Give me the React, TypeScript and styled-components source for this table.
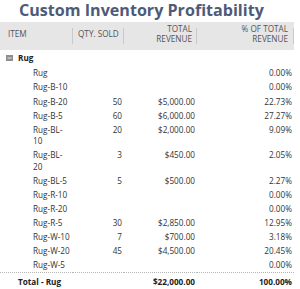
import * as React from 'react';
import styled, { createGlobalStyle } from 'styled-components';

const GlobalStyle = createGlobalStyle`
    body {
        margin: 0;
        background: #ffffff;
        font-family: "Open Sans", "Liberation Sans", sans-serif;
    }
`

const Page = styled.div`
    width: 300px;
    height: 289px;
    overflow: hidden;
`

const Title = styled.h1`
    margin: 0 0 2px;
    padding: 1px 0 0 19px;
    font-size: 16.1px;
    line-height: 19px;
    font-weight: bold;
    color: #4d5b78;
    white-space: nowrap;
`

const Table = styled.table`
    width: 294px;
    table-layout: fixed;
    border-collapse: collapse;
    font-size: 8.2px;
    color: #333333;
`

const HeadRow = styled.tr`
    background: #e6e6e6;
`

const HeadCell = styled.th<{ $align?: 'left' | 'right'; $padLeft?: number; $padRight?: number }>`
    position: relative;
    height: 28px;
    box-sizing: border-box;
    padding: 2px ${p => p.$padRight ?? 5}px 6px ${p => p.$padLeft ?? 5}px;
    text-align: ${p => p.$align ?? 'left'};
    vertical-align: middle;
    font-weight: normal;
    font-size: 8.2px;
    line-height: 10px;
    color: #555555;
    text-transform: uppercase;

    &::after {
        content: '';
        position: absolute;
        right: 0;
        top: 6px;
        bottom: 6px;
        width: 1px;
        background: #c9c9c9;
    }
`

const GroupCell = styled.td`
    height: 16px;
    padding: 0 0 0 6px;
    font-weight: bold;
    color: #222222;
    line-height: 10px;
`

const GroupLabel = styled.span`
    display: inline-flex;
    align-items: center;
    gap: 5px;
`

const Cell = styled.td<{ $right?: boolean; $indent?: number }>`
    padding: 1.35px ${p => (p.$right ? 2 : 3)}px 1.35px ${p => p.$indent ?? 0}px;
    line-height: 11.4px;
    vertical-align: top;
    text-align: ${p => (p.$right ? 'right' : 'left')};
`

const TotalRow = styled.tr`
    border-top: 1px dotted #b5b5b5;
    border-bottom: 1px dotted #b5b5b5;
`

const TotalCell = styled.td<{ $right?: boolean; $indent?: number }>`
    height: 16px;
    padding: 0 ${p => (p.$right ? 2 : 0)}px 0 ${p => p.$indent ?? 0}px;
    font-weight: bold;
    color: #222222;
    text-align: ${p => (p.$right ? 'right' : 'left')};
    vertical-align: middle;
`

const CollapseIcon = () => (
    <svg width="7" height="6" viewBox="0 0 7 6">
        <rect x="0" y="0" width="7" height="6" fill="#8e8e8e" />
        <rect x="1.5" y="2.5" width="4" height="1" fill="#e8e8e8" />
    </svg>
)

const rows: [string, string, string, string][] = [
    ['Rug', '', '', '0.00%'],
    ['Rug-B-10', '', '', '0.00%'],
    ['Rug-B-20', '50', '$5,000.00', '22.73%'],
    ['Rug-B-5', '60', '$6,000.00', '27.27%'],
    ['Rug-BL-10', '20', '$2,000.00', '9.09%'],
    ['Rug-BL-20', '3', '$450.00', '2.05%'],
    ['Rug-BL-5', '5', '$500.00', '2.27%'],
    ['Rug-R-10', '', '', '0.00%'],
    ['Rug-R-20', '', '', '0.00%'],
    ['Rug-R-5', '30', '$2,850.00', '12.95%'],
    ['Rug-W-10', '7', '$700.00', '3.18%'],
    ['Rug-W-20', '45', '$4,500.00', '20.45%'],
    ['Rug-W-5', '', '', '0.00%'],
]

export default function App() {
    return (
        <>
            <GlobalStyle />
            <Page>
                <Title>Custom Inventory Profitability</Title>
                <Table>
                    <colgroup>
                        <col style={{ width: 73 }} />
                        <col style={{ width: 51 }} />
                        <col style={{ width: 73 }} />
                        <col style={{ width: 97 }} />
                    </colgroup>
                    <thead>
                        <HeadRow>
                            <HeadCell $padLeft={8}>Item</HeadCell>
                            <HeadCell>Qty. Sold</HeadCell>
                            <HeadCell $align="right">Total<br />Revenue</HeadCell>
                            <HeadCell $align="right" $padRight={6}>% of Total<br />Revenue</HeadCell>
                        </HeadRow>
                    </thead>
                    <tbody>
                        <tr>
                            <GroupCell colSpan={4}>
                                <GroupLabel><CollapseIcon />Rug</GroupLabel>
                            </GroupCell>
                        </tr>
                        {rows.map(([item, qty, rev, pct]) => (
                            <tr key={item}>
                                <Cell $indent={33}>{item}</Cell>
                                <Cell $right>{qty}</Cell>
                                <Cell $right>{rev}</Cell>
                                <Cell $right>{pct}</Cell>
                            </tr>
                        ))}
                        <TotalRow>
                            <TotalCell $indent={18}>Total - Rug</TotalCell>
                            <TotalCell />
                            <TotalCell $right>$22,000.00</TotalCell>
                            <TotalCell $right>100.00%</TotalCell>
                        </TotalRow>
                    </tbody>
                </Table>
            </Page>
        </>
    )
}
